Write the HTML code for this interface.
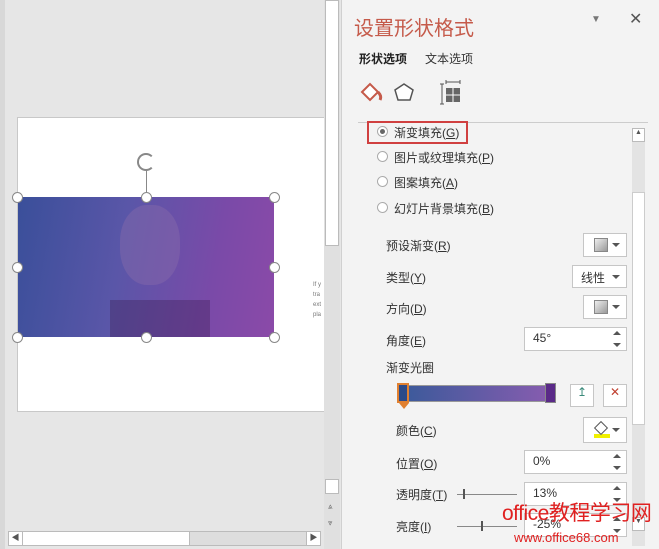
<!DOCTYPE html>
<html><head><meta charset="utf-8"><style>
*{margin:0;padding:0;box-sizing:border-box}
body{width:659px;height:549px;overflow:hidden;background:#e6e6e6;font-family:"Liberation Sans","Noto Sans CJK SC",sans-serif;position:relative;font-size:12px;color:#333}
.a{position:absolute}
.h{position:absolute;width:11px;height:11px;border:1.5px solid #888;border-radius:50%;background:#fff}
.lbl{position:absolute;font-size:12px;color:#333}
.box{position:absolute;background:#fff;border:1px solid #c6c6c6}
.dd::after{content:"";position:absolute;right:6px;top:50%;margin-top:-2px;border:4px solid transparent;border-top:4px solid #555}
.sq{position:absolute;width:14px;height:14px;border:1px solid #888;background:linear-gradient(135deg,#eee,#999);top:50%;margin-top:-7px;left:10px}
.spin::before{content:"";position:absolute;right:5px;top:-1px;border:4px solid transparent;border-bottom:4px solid #555}
.spin::after{content:"";position:absolute;right:5px;bottom:-1px;border:4px solid transparent;border-top:4px solid #555}
.val{position:absolute;left:8px;top:3px;font-size:12px;color:#333}
.r{position:absolute;width:11px;height:11px;border:1px solid #aaa;border-radius:50%;background:#fff}
</style></head><body>
<div class="a" style="left:0;top:0;width:5px;height:549px;background:#d8d8d8"></div>
<div class="a" style="left:17px;top:117px;width:307px;height:295px;background:#fff;border:1px solid #c8c8c8;border-right:none"></div>
<div class="a" style="left:18px;top:197px;width:256px;height:140px;background:linear-gradient(100deg,#3a4f9a 0%,#5a56a8 40%,#7a4aa8 75%,#8b4aa8 100%)"></div>
<div class="a" style="left:120px;top:205px;width:60px;height:80px;border-radius:45%;background:rgba(140,110,170,.4)"></div>
<div class="a" style="left:110px;top:300px;width:100px;height:37px;background:rgba(60,30,80,.35)"></div>
<div class="a" style="left:146px;top:170px;width:1px;height:27px;background:#888"></div>
<div class="a" style="left:137px;top:153px;width:18px;height:18px;border:2.5px solid #888;border-radius:50%;border-right-color:transparent"></div>
<div class="h" style="left:12px;top:192px"></div><div class="h" style="left:141px;top:192px"></div><div class="h" style="left:269px;top:192px"></div>
<div class="h" style="left:12px;top:262px"></div><div class="h" style="left:269px;top:262px"></div>
<div class="h" style="left:12px;top:332px"></div><div class="h" style="left:141px;top:332px"></div><div class="h" style="left:269px;top:332px"></div>
<div class="a" style="left:313px;top:280px;font-size:6px;line-height:10px;color:#777">If y<br>tra<br>ext<br>pla</div>
<div class="a" style="left:324px;top:0;width:16px;height:549px;background:#e0e0e0"></div>
<div class="a" style="left:325px;top:0;width:14px;height:246px;background:#fff;border:1px solid #bbb"></div>
<div class="a" style="left:325px;top:479px;width:14px;height:15px;background:#fff;border:1px solid #bbb"></div>
<div class="a" style="left:328px;top:499px;font-size:8px;color:#666;line-height:16px">⩓<br>⩔</div>
<div class="a" style="left:8px;top:531px;width:313px;height:15px;background:#ddd;border:1px solid #bbb"></div>
<div class="a" style="left:9px;top:532px;width:14px;height:13px;background:#fff;border-right:1px solid #bbb;font-size:8px;text-align:center;color:#555">◀</div>
<div class="a" style="left:23px;top:532px;width:167px;height:13px;background:#fff;border-right:1px solid #bbb"></div>
<div class="a" style="left:306px;top:532px;width:14px;height:13px;background:#fff;border-left:1px solid #bbb;font-size:8px;text-align:center;color:#555">▶</div>

<div class="a" style="left:341px;top:0;width:318px;height:549px;background:#f3f3f3;border-left:1px solid #d0d0d0"></div>
<div class="a" style="left:354px;top:12px;font-size:20px;color:#c55a4a">设置形状格式</div>
<div class="a" style="left:591px;top:14px;font-size:10px;color:#777">▼</div>
<div class="a" style="left:629px;top:9px;font-size:16px;color:#555">✕</div>
<div class="a" style="left:359px;top:50px;font-size:12px;color:#222;font-weight:bold">形状选项</div>
<div class="a" style="left:425px;top:50px;font-size:12px;color:#333">文本选项</div>
<svg class="a" style="left:356px;top:78px" width="120" height="30"><path d="M6 14 L14 6 L22 14 L14 22 Z" fill="#fff" stroke="#c55a4a" stroke-width="2"/><path d="M22 14 q4 4 2 8" stroke="#c55a4a" stroke-width="3" fill="none"/><path d="M48 6 L57 12 L54 22 L42 22 L39 12 Z" fill="#fff" stroke="#555" stroke-width="1.5"/><rect x="90" y="10" width="14" height="14" fill="#666"/><path d="M90 17h14M97 10v14" stroke="#fff" stroke-width="1"/><path d="M86 6v20M84 6h4M84 26h4M90 4h14M90 2v4M104 2v4" stroke="#555" fill="none"/></svg>
<div class="a" style="left:358px;top:122px;width:290px;height:1px;background:#ccc"></div>
<div class="a" style="left:632px;top:128px;width:13px;height:418px;background:#e3e3e3"></div>
<div class="a" style="left:632px;top:128px;width:13px;height:14px;background:#fff;border:1px solid #bbb;font-size:7px;text-align:center;color:#555">▲</div>
<div class="a" style="left:632px;top:192px;width:13px;height:233px;background:#fff;border:1px solid #ccc"></div>
<div class="a" style="left:632px;top:517px;width:13px;height:14px;background:#fff;border:1px solid #bbb;font-size:7px;text-align:center;color:#555">▼</div>
<div class="a" style="left:367px;top:121px;width:101px;height:23px;border:2px solid #d04040"></div>
<div class="r" style="left:377px;top:126px"></div><div class="a" style="left:380px;top:129px;width:5px;height:5px;border-radius:50%;background:#666"></div>
<div class="lbl" style="left:394px;top:124px">渐变填充(<u>G</u>)</div>
<div class="r" style="left:377px;top:151px"></div><div class="lbl" style="left:394px;top:149px">图片或纹理填充(<u>P</u>)</div>
<div class="r" style="left:377px;top:176px"></div><div class="lbl" style="left:394px;top:174px">图案填充(<u>A</u>)</div>
<div class="r" style="left:377px;top:202px"></div><div class="lbl" style="left:394px;top:200px">幻灯片背景填充(<u>B</u>)</div>

<div class="lbl" style="left:386px;top:237px">预设渐变(<u>R</u>)</div>
<div class="box dd" style="left:583px;top:233px;width:44px;height:24px"><div class="sq"></div></div>
<div class="lbl" style="left:386px;top:269px">类型(<u>Y</u>)</div>
<div class="box dd" style="left:572px;top:265px;width:55px;height:23px"><span class="val" style="top:3px">线性</span></div>
<div class="lbl" style="left:386px;top:300px">方向(<u>D</u>)</div>
<div class="box dd" style="left:583px;top:295px;width:44px;height:24px"><div class="sq"></div></div>
<div class="lbl" style="left:386px;top:332px">角度(<u>E</u>)</div>
<div class="box spin" style="left:524px;top:327px;width:103px;height:24px"><span class="val">45°</span></div>
<div class="lbl" style="left:386px;top:359px">渐变光圈</div>
<div class="a" style="left:400px;top:385px;width:156px;height:17px;background:linear-gradient(90deg,#3a5a9a,#8a5cb0);border:1px solid #999"></div>
<div class="a" style="left:397px;top:383px;width:12px;height:20px;background:#2c4a88;border:2px solid #e08030"></div>
<div class="a" style="left:399px;top:403px;border:5px solid transparent;border-top:6px solid #e08030"></div>
<div class="a" style="left:545px;top:383px;width:11px;height:20px;background:#5a2a88;border:1px solid #888"></div>
<div class="box" style="left:570px;top:384px;width:24px;height:23px;font-size:12px;text-align:center;color:#3a8a7a">↥</div>
<div class="box" style="left:603px;top:384px;width:24px;height:23px;font-size:12px;text-align:center;color:#c04030">✕</div>
<div class="lbl" style="left:396px;top:422px">颜色(<u>C</u>)</div>
<div class="box dd" style="left:583px;top:417px;width:44px;height:26px"><div class="a" style="left:10px;top:16px;width:16px;height:4px;background:#f0f000"></div><div class="a" style="left:12px;top:5px;width:10px;height:10px;border:1px solid #555;transform:rotate(45deg);background:#fff"></div></div>
<div class="lbl" style="left:396px;top:455px">位置(<u>O</u>)</div>
<div class="box spin" style="left:524px;top:450px;width:103px;height:24px"><span class="val">0%</span></div>
<div class="lbl" style="left:396px;top:486px">透明度(<u>T</u>)</div>
<div class="a" style="left:457px;top:494px;width:60px;height:1px;background:#888"></div>
<div class="a" style="left:463px;top:489px;width:2px;height:10px;background:#555"></div>
<div class="box spin" style="left:524px;top:482px;width:103px;height:24px"><span class="val">13%</span></div>
<div class="lbl" style="left:396px;top:518px">亮度(<u>I</u>)</div>
<div class="a" style="left:457px;top:526px;width:60px;height:1px;background:#888"></div>
<div class="a" style="left:481px;top:521px;width:2px;height:10px;background:#555"></div>
<div class="box spin" style="left:524px;top:513px;width:103px;height:24px"><span class="val">-25%</span></div>
<div class="a" style="left:502px;top:497px;font-size:21px;color:#e02020;white-space:nowrap;letter-spacing:-.5px">office教程学习网</div>
<div class="a" style="left:514px;top:530px;font-size:13px;color:#e02020;white-space:nowrap">www.office68.com</div>
</body></html>
